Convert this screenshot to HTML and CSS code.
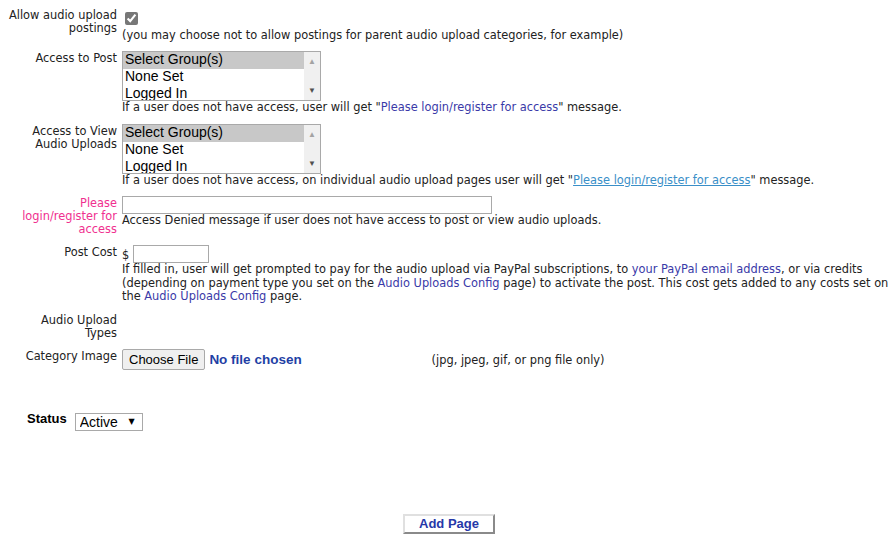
FILE: index.html
```html
<!DOCTYPE html>
<html lang="en">
<head>
    <meta charset="UTF-8">
    <title>Add Audio Upload Category</title>
    <link rel="stylesheet" href="styles.css">
</head>
<body>
    <form class="cat-form">
        <table class="form-table">
            <tr>
                <td class="label">Allow audio upload postings</td>
                <td class="field">
                    <input type="checkbox" class="chk" checked><br>
                    (you may choose not to allow postings for parent audio upload categories, for example)
                </td>
            </tr>
            <tr>
                <td class="label">Access to Post</td>
                <td class="field">
                    <div class="listbox">
                        <ul class="opts">
                            <li class="sel">Select Group(s)</li>
                            <li>None Set</li>
                            <li>Logged In</li>
                        </ul>
                        <div class="scroll">
                            <span class="up">&#9650;</span>
                            <span class="down">&#9660;</span>
                        </div>
                    </div>
                    If a user does not have access, user will get "<a href="#" class="msg-link">Please login/register for access</a>" message.
                </td>
            </tr>
            <tr>
                <td class="label">Access to View Audio Uploads</td>
                <td class="field">
                    <div class="listbox">
                        <ul class="opts">
                            <li class="sel">Select Group(s)</li>
                            <li>None Set</li>
                            <li>Logged In</li>
                        </ul>
                        <div class="scroll">
                            <span class="up">&#9650;</span>
                            <span class="down">&#9660;</span>
                        </div>
                    </div>
                    If a user does not have access, on individual audio upload pages user will get "<a href="#" class="msg-link under">Please login/register for access</a>" message.
                </td>
            </tr>
            <tr>
                <td class="label pink">Please login/register for access</td>
                <td class="field">
                    <input type="text" class="txt-wide">
                    Access Denied message if user does not have access to post or view audio uploads.
                </td>
            </tr>
            <tr>
                <td class="label">Post Cost</td>
                <td class="field">
                    <div class="cost-line"><span class="dollar">$</span><input type="text" class="txt-cost"></div>
                    If filled in, user will get prompted to pay for the audio upload via PayPal subscriptions, to <a href="#" class="msg-link">your PayPal email address</a>, or via credits (depending on payment type you set on the <a href="#" class="msg-link">Audio Uploads Config</a> page) to activate the post. This cost gets added to any costs set on the <a href="#" class="msg-link">Audio Uploads Config</a> page.
                </td>
            </tr>
            <tr>
                <td class="label">Audio Upload Types</td>
                <td class="field"></td>
            </tr>
            <tr>
                <td class="label">Category Image</td>
                <td class="field">
                    <input type="file" class="file-in"> (jpg, jpeg, gif, or png file only)
                </td>
            </tr>
        </table>

        <div class="status-row">
            <span class="status-label">Status</span>
            <span class="sel-wrap">
                <select class="status-sel">
                    <option>Active</option>
                    <option>Inactive</option>
                </select>
                <span class="sel-arrow">&#9660;</span>
            </span>
        </div>

        <div class="submit-row">
            <button type="button" class="add-btn">Add Page</button>
        </div>
    </form>
</body>
</html>
```

FILE: styles.css
```css
body{
    margin: 8px 0 8px 8px;
    font-family: "DejaVu Sans", Verdana, sans-serif;
    font-size: 11.4px;
    color: #222;
    background: #fff;
}
.form-table{
    border-collapse: collapse;
}
.form-table td{
    vertical-align: top;
    padding: 0 0 9px 0;
    line-height: 13.5px;
}
.form-table .label{
    width: 109px;
    padding-right: 5px;
    padding-top: 1px;
    text-align: right;
    line-height: 13px;
}
.form-table .pink{
    color: #f0308f;
}
.chk{
    margin: 4px 3px 2px 3px;
    width: 13px;
    height: 13px;
    accent-color: #777;
}

/* list box */
.listbox{
    display: flex;
    width: 199px;
    height: 50px;
    box-sizing: border-box;
    border: 1px solid #a9a9a9;
    overflow: hidden;
    font-family: "Liberation Sans", Arial, sans-serif;
    font-size: 14px;
    color: #000;
    background: #fff;
}
.opts{
    flex: 1;
    list-style: none;
    margin: 0;
    padding: 0;
}
.opts li{
    height: 17px;
    line-height: 14px;
    padding-left: 2px;
}
.opts .sel{
    background-color: #c8c8c8;
}
.scroll{
    width: 16px;
    background: #f0f0f0;
    display: flex;
    flex-direction: column;
    justify-content: space-between;
    align-items: center;
    font-size: 8px;
    line-height: 8px;
    padding: 6px 0 5px 0;
}
.scroll .up{
    color: #a3a3a3;
}
.scroll .down{
    color: #505050;
}

.msg-link{
    color: #3a3aa8;
    text-decoration: none;
}
.msg-link.under{
    color: #3a8fc8;
    text-decoration: underline;
}
.txt-wide{
    width: 370px;
    height: 18px;
    box-sizing: border-box;
    border: 1px solid #a9a9a9;
    margin: 0;
    padding: 1px 2px;
    display: block;
}
.cost-line{
    display: flex;
    align-items: flex-start;
    height: 18px;
}
.dollar{
    margin-top: 4px;
    width: 11px;
}
.txt-cost{
    width: 76px;
    height: 18px;
    box-sizing: border-box;
    border: 1px solid #a9a9a9;
    margin: 0;
    padding: 1px 2px;
}
.file-in{
    width: 306px;
    height: 21px;
    margin: 0;
    font-family: "Liberation Sans", Arial, sans-serif;
    font-size: 13.5px;
    font-weight: bold;
    color: #1f3fa5;
}
.file-in::file-selector-button{
    font-family: "Liberation Sans", Arial, sans-serif;
    font-size: 13px;
    font-weight: normal;
    color: #000;
    height: 21px;
    padding: 0 6px;
    margin-right: 4px;
    background: #efefef;
    border: 1px solid #a9a9a9;
    border-radius: 2px;
}
.status-row{
    margin: 34px 0 0 19px;
    display: flex;
    align-items: flex-start;
    gap: 8px;
}
.status-label{
    font-family: "Liberation Sans", Arial, sans-serif;
    font-size: 13px;
    font-weight: bold;
    color: #000;
    margin-top: -2px;
}
.sel-wrap{
    position: relative;
    display: inline-block;
}
.status-sel{
    appearance: none;
    -webkit-appearance: none;
    width: 68px;
    height: 18px;
    border: 1px solid #a9a9a9;
    background: #fff;
    font-family: "Liberation Sans", Arial, sans-serif;
    font-size: 14px;
    color: #000;
    padding: 0 0 0 4px;
    margin: 0;
    display: block;
}
.sel-arrow{
    position: absolute;
    right: 8px;
    top: 4px;
    font-size: 8px;
    line-height: 10px;
    color: #000;
    pointer-events: none;
}
.submit-row{
    margin-top: 83px;
    padding-right: 8px;
    text-align: center;
}
.add-btn{
    width: 92px;
    height: 20px;
    background: #fff;
    border: 2px solid;
    border-color: #e0e0e0 #8a8a8a #8a8a8a #e0e0e0;
    font-family: "Liberation Sans", Arial, sans-serif;
    font-size: 13px;
    font-weight: bold;
    color: #2638a8;
    padding: 0;
    margin-left: 4px;
}
```
